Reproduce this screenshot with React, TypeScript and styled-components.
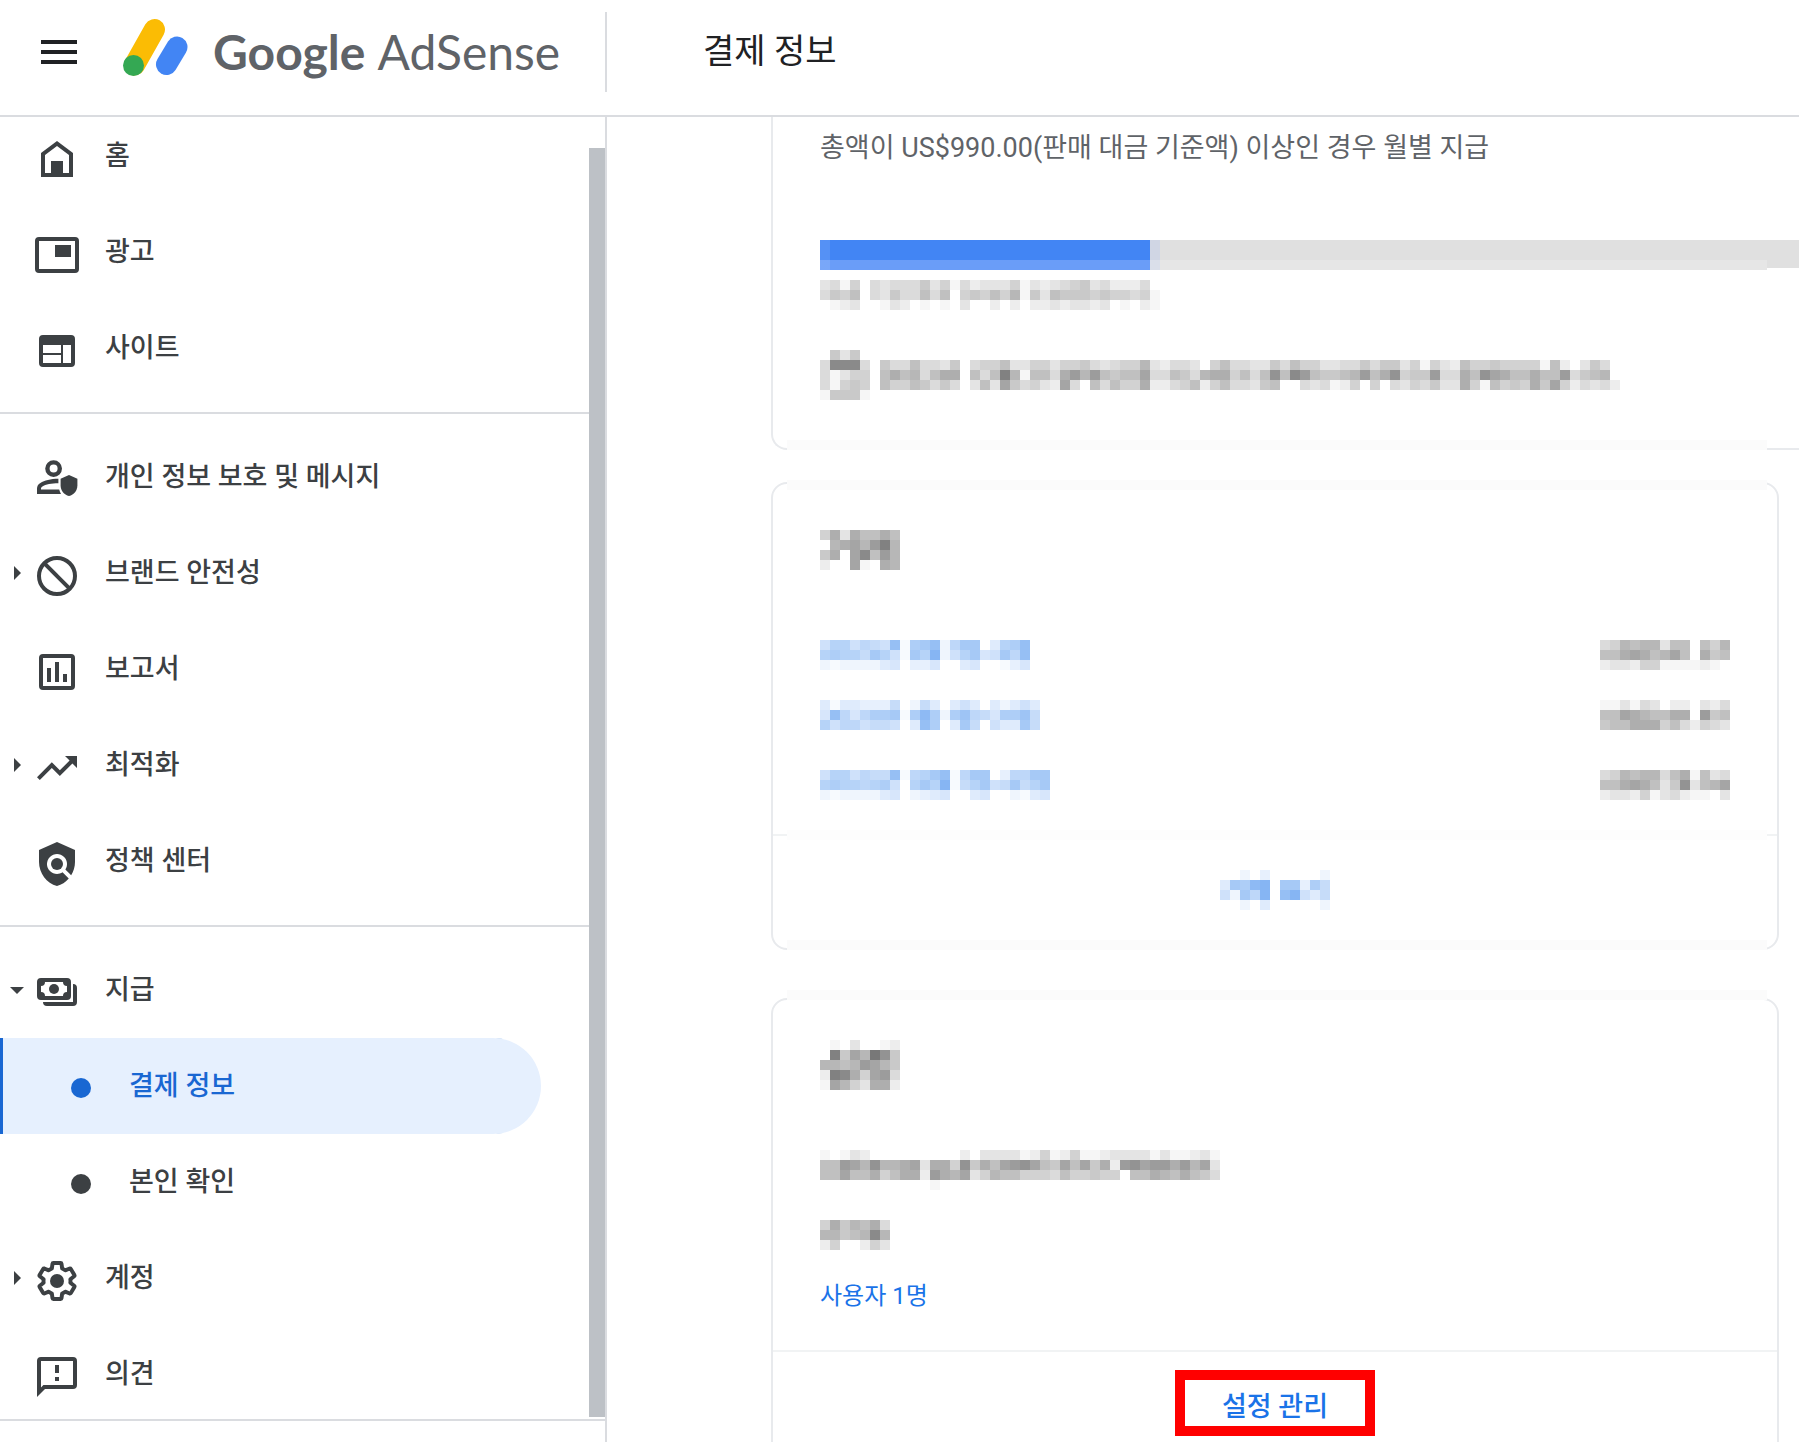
import React from "react";
import styled, { createGlobalStyle, css } from "styled-components";

const color = {
  text: "#3c4043",
  muted: "#5f6368",
  strong: "#202124",
  link: "#1a73e8",
  active: "#1967d2",
  activeBg: "#e6f0fe",
  line: "#dadce0",
  cardLine: "#e8eaed",
};

const GlobalStyle = createGlobalStyle`
  *, *::before, *::after { box-sizing: border-box; }
  body {
    margin: 0;
    background: #fff;
    color: ${color.text};
    font-family: Roboto, "Noto Sans CJK KR", sans-serif;
  }
`;

const Page = styled.div`
  display: flex;
  flex-direction: column;
  height: 100vh;
  overflow: hidden;
`;

/* ---------- header ---------- */

const Header = styled.header`
  display: flex;
  flex: none;
  align-items: flex-start;
  height: 117px;
  border-bottom: 2px solid ${color.line};
`;

const Brand = styled.div`
  display: flex;
  align-items: center;
  flex: none;
  width: 607px;
  height: 80px;
  margin-top: 12px;
  padding-left: 35px;
  border-right: 2px solid ${color.line};
`;

const MenuButton = styled.button`
  display: flex;
  width: 48px;
  height: 48px;
  margin-right: 40px;
  padding: 0;
  border: 0;
  background: none;
  color: ${color.strong};
`;

const LogoLink = styled.a`
  display: flex;
  align-items: center;
  gap: 24px;
  color: ${color.muted};
  text-decoration: none;
`;

const Wordmark = styled.span`
  display: flex;
  align-items: baseline;
  gap: 12px;
  font-family: Lato, sans-serif;
  font-size: 48px;
  line-height: 60px;
`;

const WordStrong = styled.span`
  font-weight: 700;
`;

const Title = styled.h1`
  margin: 27px 0 0 96px;
  color: ${color.strong};
  font-size: 34px;
  font-weight: 400;
  line-height: 48px;
`;

/* ---------- sidebar ---------- */

const Body = styled.div`
  display: flex;
  flex: 1;
  min-height: 0;
`;

const Sidebar = styled.aside`
  display: flex;
  flex-direction: column;
  flex: none;
  width: 607px;
  border-right: 2px solid ${color.line};
`;

const SidebarScroll = styled.div`
  display: flex;
  flex: 1;
  min-height: 0;
  overflow: hidden;
`;

const Nav = styled.nav`
  flex: 1;
  margin-top: -9px;
`;

const ScrollTrack = styled.div`
  display: flex;
  width: 16px;
  padding: 31px 0 2px;
`;

const ScrollThumb = styled.div`
  flex: 1;
  background: #bdc1c6;
`;

const SidebarFoot = styled.div`
  height: 23px;
  border-top: 2px solid ${color.line};
`;

const NavGroup = styled.ul`
  margin: 0;
  padding: 0 0 16px;
  list-style: none;

  & + & {
    padding-top: 15px;
    border-top: 2px solid ${color.line};
  }
`;

const NavLink = styled.a<{ $active?: boolean }>`
  display: flex;
  align-items: center;
  height: 96px;
  margin-right: 48px;
  color: ${color.text};
  font-size: 27px;
  font-weight: 500;
  line-height: 40px;
  text-decoration: none;

  ${(p) =>
    p.$active &&
    css`
      border-radius: 0 48px 48px 0;
      background: ${color.activeBg};
      box-shadow: inset 3px 0 0 ${color.active};
      color: ${color.active};
    `}
`;

const CaretSlot = styled.span`
  display: flex;
  justify-content: center;
  width: 33px;
`;

const IconSlot = styled.span`
  display: flex;
  width: 72px;
  padding-top: 6px;
`;

const DotSlot = styled.span`
  display: flex;
  justify-content: flex-end;
  width: 129px;
  padding: 4px 38px 0 0;
`;

const Dot = styled.span`
  width: 20px;
  height: 20px;
  border-radius: 50%;
  background: currentColor;
`;

/* ---------- content ---------- */

const Main = styled.main`
  flex: 1;
  min-width: 0;
  padding: 0 20px 0 164px;
`;

const Card = styled.section<{ $gap?: number }>`
  position: relative;
  margin-top: ${(p) => p.$gap ?? 0}px;
  border: 2px solid ${color.cardLine};
  border-radius: 16px;
`;

const ThresholdCard = styled(Card)`
  margin-right: -20px;
  padding: 11px 0 48px 47px;
  border-width: 0 0 2px 2px;
  border-radius: 0 0 0 16px;
`;

const SoftEdge = styled.span<{ $top?: number; $inset?: number; $faint?: boolean }>`
  position: absolute;
  left: 14px;
  right: ${(p) => p.$inset ?? 10}px;
  height: 10px;
  background: ${(p) => (p.$faint ? "#fdfdfd" : "#fbfbfb")};
  ${(p) => (p.$top === undefined ? "bottom: -2px;" : `top: ${p.$top}px;`)}
`;

const CardBody = styled.div<{ $top: number; $bottom: number }>`
  padding: ${(p) => p.$top}px 47px ${(p) => p.$bottom}px;
`;

const CardHeading = styled.h2<{ $gap: number }>`
  margin: 0 0 ${(p) => p.$gap}px;
`;

const CardFooter = styled.div<{ $top: number }>`
  position: relative;
  display: flex;
  justify-content: center;
  padding: ${(p) => p.$top}px 0 38px;
  border-top: 2px solid #f1f3f4;
`;

const Summary = styled.p`
  margin: 0 0 72px;
  color: ${color.muted};
  font-size: 27px;
  line-height: 40px;
  white-space: nowrap;
`;

const Track = styled.div`
  position: relative;
  display: flex;
  height: 30px;
  background: linear-gradient(#e0e0e0 20px, #e6e6e6 20px);

  &::after {
    content: "";
    position: absolute;
    top: 0;
    right: 0;
    width: 32px;
    height: 30px;
    background: linear-gradient(#e0e0e0 28px, #fff 28px);
  }
`;

const Fill = styled.div`
  background: linear-gradient(90deg, rgba(255, 255, 255, 0.1) 10px, transparent 10px),
    linear-gradient(#4285f4 20px, #6a9df8 20px);

  & + span {
    width: 10px;
    background: linear-gradient(#d0d6e4 20px, #dadfea 20px);
  }
`;

const Caption = styled.div`
  margin: 10px 0 40px;
`;

const Notice = styled.div`
  display: flex;
  align-items: center;
  gap: 10px;
`;

const Ledger = styled.table`
  width: 100%;
  border-collapse: collapse;
`;

const LedgerRow = styled.tr<{ $gap: number }>`
  td {
    padding: 0 0 ${(p) => p.$gap}px;
  }
  td:last-child svg {
    margin-left: auto;
  }
`;

const Stack = styled.div`
  display: flex;
  flex-direction: column;
  align-items: flex-start;
  gap: 30px;
`;

const TextLink = styled.a`
  color: ${color.link};
  font-size: 24px;
  line-height: 32px;
  text-decoration: none;
`;

const ManageButton = styled.button`
  width: 200px;
  height: 66px;
  padding: 8px 0 0;
  border: 10px solid #f00;
  background: none;
  color: ${color.link};
  font-family: inherit;
  font-size: 27px;
  font-weight: 500;
  line-height: 36px;
`;

/* Redacted text: each hex digit is the strength of one 10px cell. */
const Block = styled.svg`
  display: block;
  flex: none;
`;

function Mosaic({ rows, tint = "#000" }: { rows: string[]; tint?: string }) {
  const width = rows[0].length * 10;
  const height = rows.length * 10;
  return (
    <Block
      width={width}
      height={height}
      viewBox={`0 0 ${width} ${height}`}
      shapeRendering="crispEdges"
      role="img"
      aria-label="가려진 정보"
    >
      {rows.flatMap((row, y) =>
        [...row].map((cell, x) => {
          const level = parseInt(cell, 16);
          return level ? (
            <rect
              key={`${x}-${y}`}
              x={x * 10}
              y={y * 10}
              width={10}
              height={10}
              fill={tint}
              fillOpacity={level * 0.0353}
            />
          ) : null;
        })
      )}
    </Block>
  );
}

const redacted = {
  caption: [
    "3415043444635142333513234563422240",
    "4657043644747056575816376665655451",
    "0123001320101030020202232332301021",
  ],
  calendar: ["06360", "4ddd4", "41355", "41565", "16661"],
  notice: [
    "64474436045573355355643455832443057443364755334464663515327556555517203640",
    "797847990747e817749b8b7677a447648995747c7db76678b79c566b4497ca977977b46780",
    "755764640373a64532a407475592245725744367004341250504354633951756596a524342",
  ],
  transactions: ["59397797", "089a8be8", "690ad7b8", "200a1098"],
  entries: [
    {
      gap: 30,
      period: ["6996876d1abd28bb049ad", "9a997b961b9f269b56b8d", "212222450335004500135"],
      amount: ["4587883770758", "779a978a70967", "2332551111210"],
    },
    {
      gap: 40,
      period: ["4144333702740464042464", "5d858aab1aea2ac875aac7", "9688677604da04b70644b7"],
      amount: ["1131430220324", "77a9877990b67", "6779995742543"],
    },
    {
      gap: 0,
      period: ["6996877d189bd18bb0388bb", "9a9989a609b9f179b67b79b", "21222245023450045002145"],
      amount: ["4587884791734", "779a9736c378a", "2332513421103"],
    },
  ],
  viewAll: ["00203000002", "4baef0bb3a7", "62b8f0df647", "00204000002"],
  settings: ["01030012", "0e6a8fc6", "8878ba86", "2ed95ab4", "1a853992"],
  account: [
    "1013200000000020333312512511233331311231",
    "77ba8c889a3995c697abca76a7a692bcabb9b8a3",
    "77a77957992b98a3587755547556550779879764",
    "0000000000010000000000000000000000000000",
  ],
  method: ["5968794", "88678d8", "2500253"],
};

/* ---------- icons ---------- */

const icons: Record<string, React.ReactNode> = {
  menu: <path d="M3 6h18v2H3zM3 11h18v2H3zM3 16h18v2H3z" />,
  home: (
    <path
      fillRule="evenodd"
      d="M12 3 4 9v12h16V9zM6 19v-9l6-4.5 6 4.5v9h-3v-6H9v6z"
    />
  ),
  ads: (
    <path
      fillRule="evenodd"
      d="M3 3h18a2 2 0 0 1 2 2v14a2 2 0 0 1-2 2H3a2 2 0 0 1-2-2V5a2 2 0 0 1 2-2zm0 2v14h18V5zm8 2h8v6h-8z"
    />
  ),
  sites: (
    <path
      fillRule="evenodd"
      d="M5 4h14a2 2 0 0 1 2 2v12a2 2 0 0 1-2 2H5a2 2 0 0 1-2-2V6a2 2 0 0 1 2-2zm0 5v4h9V9zm0 5v4h9v-4zm10-5v9h4V9z"
    />
  ),
  privacy: (
    <>
      <circle cx="10.3" cy="6.3" r="3.1" fill="none" stroke="currentColor" strokeWidth="2.2" />
      <path
        fillRule="evenodd"
        d="M2 19v-2.7c0-1.2.6-2.2 1.7-2.8 2-1.2 5-2.1 9-2.1v2.2c-3.4 0-6.4.6-8 1.6-.5.3-.7.6-.7 1.100v.5h9.100c.2.8.5 1.500.9 2.200z"
      />
      <path d="m18 9.500 4.200 1.900v3.200c0 2.600-1.700 4.800-4.200 5.400-2.500-.6-4.200-2.800-4.200-5.400v-3.200z" />
    </>
  ),
  block: (
    <g fill="none" stroke="currentColor" strokeWidth="2">
      <circle cx="12" cy="12" r="9" />
      <path d="M5.7 5.7l12.6 12.6" />
    </g>
  ),
  reports: (
    <path
      fillRule="evenodd"
      d="M5 3h14a2 2 0 0 1 2 2v14a2 2 0 0 1-2 2H5a2 2 0 0 1-2-2V5a2 2 0 0 1 2-2zm0 2v14h14V5zm2 5h2v7H7zm4-3h2v10h-2zm4 6h2v4h-2z"
    />
  ),
  trend: (
    <path d="m16 6 2.29 2.29-4.88 4.88-4-4L2 16.59 3.41 18l6-6 4 4 6.3-6.29L22 12V6z" />
  ),
  policy: (
    <>
      <path d="M21 5l-9-4-9 4v6c0 5.55 3.84 10.74 9 12 2.3-.56 4.33-1.9 5.88-3.71l-3.12-3.12c-1.94 1.29-4.58 1.07-6.29-.64-1.95-1.95-1.95-5.12 0-7.07 1.95-1.95 5.12-1.95 7.07 0 1.71 1.71 1.92 4.35.64 6.29l2.9 2.9C20.29 15.69 21 13.38 21 11z" />
      <circle cx="12" cy="12" r="3" />
    </>
  ),
  payments: (
    <>
      <path
        fillRule="evenodd"
        d="M4 4.5h13a2 2 0 0 1 2 2v7a2 2 0 0 1-2 2H4a2 2 0 0 1-2-2v-7a2 2 0 0 1 2-2zM6 6.5a2 2 0 0 1-2 2v3a2 2 0 0 1 2 2h9a2 2 0 0 1 2-2v-3a2 2 0 0 1-2-2z"
      />
      <circle cx="10.5" cy="10" r="2.5" />
      <path d="M20 7.5a2 2 0 0 1 2 2v7a2 2 0 0 1-2 2H7a2 2 0 0 1-2-2h15z" />
    </>
  ),
  account: (
    <>
      <g transform="translate(12 12) scale(.9) translate(-12 -12)">
        <path
          fill="none"
          stroke="currentColor"
          strokeWidth="2.2"
          strokeLinejoin="round"
          d="M19.43 12.98c.04-.32.07-.64.07-.98 0-.34-.03-.66-.07-.98l2.11-1.65c.19-.15.24-.42.12-.64l-2-3.46c-.09-.16-.26-.25-.44-.25-.06 0-.12.01-.17.03l-2.49 1c-.52-.4-1.08-.73-1.69-.98l-.38-2.65C14.46 2.18 14.25 2 14 2h-4c-.25 0-.46.18-.49.42l-.38 2.65c-.61.25-1.17.59-1.69.98l-2.49-1c-.06-.02-.12-.03-.18-.03-.17 0-.34.09-.43.25l-2 3.46c-.13.22-.07.49.12.64l2.11 1.65c-.04.32-.07.65-.07.98 0 .33.03.66.07.98l-2.11 1.65c-.19.15-.24.42-.12.64l2 3.46c.09.16.26.25.44.25.06 0 .12-.01.17-.03l2.49-1c.52.4 1.08.73 1.69.98l.38 2.65c.03.24.24.42.49.42h4c.25 0 .46-.18.49-.42l.38-2.65c.61-.25 1.17-.59 1.69-.98l2.49 1c.06.02.12.03.18.03.17 0 .34-.09.43-.25l2-3.46c.12-.22.07-.49-.12-.64z"
        />
      </g>
      <circle cx="12" cy="12" r="3.5" />
    </>
  ),
  feedback: (
    <path
      fillRule="evenodd"
      d="M20 2H4a2 2 0 0 0-2 2v18l4-4h14a2 2 0 0 0 2-2V4a2 2 0 0 0-2-2zm0 14H5.2L4 17.2V4h16zm-9-4h2v2h-2zm0-6h2v4h-2z"
    />
  ),
};

const Icon = ({ name }: { name: string }) => (
  <svg width="48" height="48" viewBox="0 0 24 24" fill="currentColor" aria-hidden="true">
    {icons[name]}
  </svg>
);

const Caret = ({ open }: { open: boolean }) => (
  <svg width="14" height="14" viewBox="0 0 14 14" fill="currentColor" aria-hidden="true">
    <path d={open ? "M0 4h14L7 11z" : "M4 0v14l7-7z"} />
  </svg>
);

const AdSenseMark = () => (
  <svg width="66" height="68" viewBox="0 0 66 68" aria-hidden="true">
    <g strokeWidth="21" strokeLinecap="round">
      <path d="M31.5 11.5 11.5 47" stroke="#fbbc04" />
      <path d="M54 29 43.500 46.500" stroke="#4285f4" />
    </g>
    <circle cx="10.5" cy="47.500" r="10.5" fill="#34a853" />
  </svg>
);

/* ---------- navigation ---------- */

type Item = { label: string; icon?: string; caret?: "open" | "closed"; active?: boolean };

const groups: Item[][] = [
  [
    { label: "홈", icon: "home" },
    { label: "광고", icon: "ads" },
    { label: "사이트", icon: "sites" },
  ],
  [
    { label: "개인 정보 보호 및 메시지", icon: "privacy" },
    { label: "브랜드 안전성", icon: "block", caret: "closed" },
    { label: "보고서", icon: "reports" },
    { label: "최적화", icon: "trend", caret: "closed" },
    { label: "정책 센터", icon: "policy" },
  ],
  [
    { label: "지급", icon: "payments", caret: "open" },
    { label: "결제 정보", active: true },
    { label: "본인 확인" },
    { label: "계정", icon: "account", caret: "closed" },
    { label: "의견", icon: "feedback" },
  ],
];

const NavItem = ({ label, icon, caret, active }: Item) => (
  <li>
    <NavLink href="#" $active={active} aria-current={active ? "page" : undefined}>
      {icon ? (
        <>
          <CaretSlot>{caret && <Caret open={caret === "open"} />}</CaretSlot>
          <IconSlot>
            <Icon name={icon} />
          </IconSlot>
        </>
      ) : (
        <DotSlot>
          <Dot />
        </DotSlot>
      )}
      {label}
    </NavLink>
  </li>
);

const paidShare = 33.7;

export default function App() {
  return (
    <Page>
      <GlobalStyle />
      <Header>
        <Brand>
          <MenuButton aria-label="메뉴">
            <Icon name="menu" />
          </MenuButton>
          <LogoLink href="#">
            <AdSenseMark />
            <Wordmark>
              <WordStrong>Google</WordStrong>
              <span>AdSense</span>
            </Wordmark>
          </LogoLink>
        </Brand>
        <Title>결제 정보</Title>
      </Header>
      <Body>
        <Sidebar>
          <SidebarScroll>
            <Nav>
              {groups.map((items, i) => (
                <NavGroup key={i}>
                  {items.map((item) => (
                    <NavItem key={item.label} {...item} />
                  ))}
                </NavGroup>
              ))}
            </Nav>
            <ScrollTrack>
              <ScrollThumb />
            </ScrollTrack>
          </SidebarScroll>
          <SidebarFoot />
        </Sidebar>
        <Main>
          <ThresholdCard>
            <Summary>총액이 US$990.00(판매 대금 기준액) 이상인 경우 월별 지급</Summary>
            <Track role="progressbar" aria-label="지급 기준액" aria-valuenow={paidShare}>
              <Fill style={{ width: `${paidShare}%` }} />
              <span />
            </Track>
            <Caption>
              <Mosaic rows={redacted.caption} />
            </Caption>
            <Notice>
              <Mosaic rows={redacted.calendar} />
              <Mosaic rows={redacted.notice} />
            </Notice>
            <SoftEdge $inset={32} />
          </ThresholdCard>

          <Card $gap={32}>
            <SoftEdge $top={-4} />
            <CardBody $top={46} $bottom={34}>
              <CardHeading $gap={70}>
                <Mosaic rows={redacted.transactions} />
              </CardHeading>
              <Ledger>
                <tbody>
                  {redacted.entries.map((entry, i) => (
                    <LedgerRow key={i} $gap={entry.gap}>
                      <td>
                        <Mosaic rows={entry.period} tint={color.link} />
                      </td>
                      <td>
                        <Mosaic rows={entry.amount} />
                      </td>
                    </LedgerRow>
                  ))}
                </tbody>
              </Ledger>
            </CardBody>
            <CardFooter $top={34}>
              <SoftEdge $top={-6} $faint />
              <TextLink href="#">
                <Mosaic rows={redacted.viewAll} tint={color.link} />
              </TextLink>
            </CardFooter>
            <SoftEdge />
          </Card>

          <Card $gap={48}>
            <SoftEdge $top={-10} />
            <CardBody $top={40} $bottom={38}>
              <CardHeading $gap={60}>
                <Mosaic rows={redacted.settings} />
              </CardHeading>
              <Stack>
                <Mosaic rows={redacted.account} />
                <Mosaic rows={redacted.method} />
                <TextLink href="#">사용자 1명</TextLink>
              </Stack>
            </CardBody>
            <CardFooter $top={18}>
              <ManageButton>설정 관리</ManageButton>
            </CardFooter>
          </Card>
        </Main>
      </Body>
    </Page>
  );
}
